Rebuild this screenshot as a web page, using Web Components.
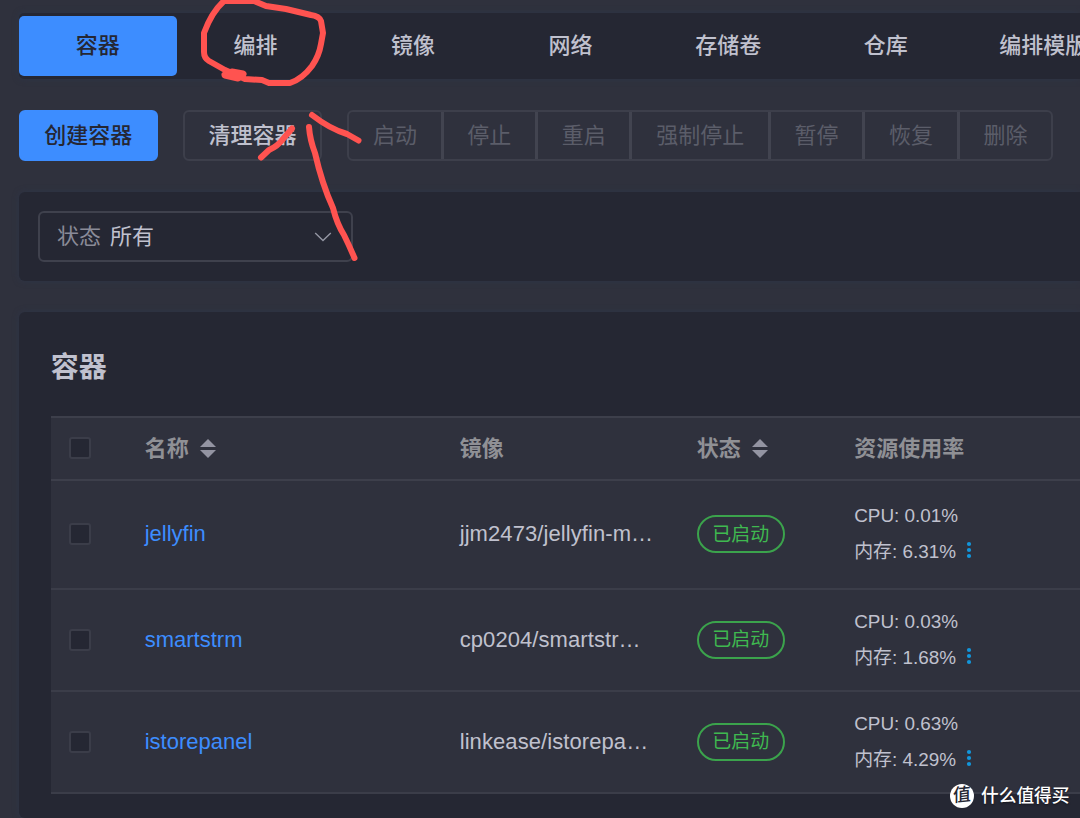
<!DOCTYPE html>
<html lang="zh-CN">
<head>
<meta charset="utf-8">
<title>容器</title>
<style>
    html, body {
        margin: 0;
        height: 818px;
        overflow: hidden;
        background: #2f313d;
    }
    body {
        font-family: "Liberation Sans", "Noto Sans CJK SC", sans-serif;
        font-size: 22px;
        color: #c0c1ce;
    }
</style>
</head>
<body>
<docker-page></docker-page>
<script>
class BaseElement extends HTMLElement {
    constructor() {
        super();
        this.attachShadow({mode: "open"});
    }

    connectedCallback() {
        const template = document.createElement("template");
        template.innerHTML = `<style>${this.getStyles()}</style>${this.getTemplate()}`;
        this.shadowRoot.replaceChildren(template.content.cloneNode(true));
    }

    getStyles() {
        return "";
    }

    getTemplate() {
        return "<slot></slot>";
    }
}

class TabItem extends BaseElement {
    getStyles() {
        return `
            :host {
                flex: 0 0 157.6px;
                height: 60px;
                display: flex;
                align-items: center;
                justify-content: center;
                box-sizing: border-box;
                padding-bottom: 6px;
                border-radius: 5px;
                font-weight: 500;
                white-space: nowrap;
            }
            :host([active]) { background: #3d8dff; color: #252733; }
        `;
    }
}

class TabBar extends BaseElement {
    getStyles() {
        return `
            :host {
                display: flex;
                box-sizing: border-box;
                height: 66px;
                padding-top: 2.7px;
                border-radius: 5px 0 0 5px;
                background: #252733;
                box-shadow: 0 0 6px #2d3547;
            }
        `;
    }
}

class ActionButton extends BaseElement {
    getStyles() {
        return `
            :host {
                display: flex;
                align-items: center;
                justify-content: center;
                box-sizing: border-box;
                width: 138.6px;
                height: 50.5px;
                padding-bottom: 5px;
                border: 2px solid #3d3f4b;
                border-radius: 6px;
                font-weight: 500;
            }
            :host([primary]) { background: #3d8dff; border-color: #3d8dff; color: #252733; }
        `;
    }
}

class ButtonGroup extends BaseElement {
    getStyles() {
        return `
            :host {
                display: flex;
                box-sizing: border-box;
                width: 706px;
                height: 50.5px;
                border: 2px solid #3d3f4b;
                border-radius: 6px;
                color: #5b5d69;
            }
            span {
                flex: 1 1 auto;
                display: flex;
                align-items: center;
                justify-content: center;
                padding-bottom: 5px;
                border-left: 3px solid #424450;
            }
            span:first-of-type { border-left: 0; }
        `;
    }

    getTemplate() {
        return this.getAttribute("labels").split(",").map(label => `<span>${label}</span>`).join("");
    }
}

class FilterSelect extends BaseElement {
    getStyles() {
        return `
            :host {
                display: flex;
                align-items: center;
                box-sizing: border-box;
                width: 315px;
                height: 51px;
                padding: 0 19px 5px 17px;
                border: 2px solid #3f414d;
                border-radius: 6px;
            }
            label { color: #8a8b98; margin-right: 9px; }
            svg { margin-left: auto; margin-top: 6px; }
        `;
    }

    getTemplate() {
        return `
            <label>${this.getAttribute("label")}</label><slot></slot>
            <svg width="18" height="12" viewBox="0 0 18 12" fill="none" stroke="#9496a3" stroke-width="1.4">
                <path d="M1.200 2 L9 9.600 L16.800 2"/>
            </svg>
        `;
    }
}

class PanelCard extends BaseElement {
    getStyles() {
        return `
            :host {
                display: block;
                box-sizing: border-box;
                border-radius: 6px 0 0 6px;
                background: #252733;
                box-shadow: 0 0 6px #2d3547;
            }
        `;
    }
}

class CheckBox extends BaseElement {
    getStyles() {
        return `
            :host {
                display: block;
                box-sizing: border-box;
                width: 22px;
                height: 22px;
                border: 2px solid #3b3d49;
                border-radius: 3px;
                background: #252733;
            }
        `;
    }

    getTemplate() {
        return "";
    }
}

class SortIcon extends BaseElement {
    getStyles() {
        return `
            :host { display: block; width: 16px; height: 19px; margin-left: 11px; }
            svg { display: block; }
        `;
    }

    getTemplate() {
        return `
            <svg width="16" height="19" viewBox="0 0 16 19" fill="#9394a2">
                <path d="M8 0 L16 8 H0 Z M0 11 H16 L8 19 Z"/>
            </svg>
        `;
    }
}

class StatusTag extends BaseElement {
    getStyles() {
        return `
            :host {
                display: flex;
                align-items: center;
                justify-content: center;
                box-sizing: border-box;
                width: 88px;
                height: 38px;
                padding-bottom: 4px;
                border: 2px solid #3ba34c;
                border-radius: 19px;
                color: #3fb950;
                font-size: 19px;
            }
        `;
    }
}

// Shared column track, so the head and the rows line up
const columns = "75.5px 315px 237px 157.5px 1fr";

class TableHead extends BaseElement {
    getStyles() {
        return `
            :host {
                display: grid;
                grid-template-columns: ${columns};
                align-items: center;
                box-sizing: border-box;
                height: 65px;
                padding-left: 18.400px;
                border-top: 2px solid #3d3f4b;
                border-bottom: 2px solid #3d3f4b;
                color: #8f9095;
                font-weight: bold;
            }
            div { display: flex; align-items: center; }
            span { position: relative; top: -2px; }
        `;
    }

    getTemplate() {
        return `
            <check-box></check-box>
            <div><span>名称</span><sort-icon></sort-icon></div>
            <div><span>镜像</span></div>
            <div><span>状态</span><sort-icon></sort-icon></div>
            <div><span>资源使用率</span></div>
        `;
    }
}

class ContainerRow extends BaseElement {
    getStyles() {
        return `
            :host {
                display: grid;
                grid-template-columns: ${columns};
                align-items: center;
                box-sizing: border-box;
                padding-left: 18.400px;
                border-bottom: 2px solid #3b3d49;
            }
            a { color: #3d8dff; }
            .image { letter-spacing: 0.08px; }
            .usage { font-size: 18.9px; line-height: 36px; }
            .memory { display: flex; align-items: center; }
            svg { margin: -4px 0 0 10px; }
        `;
    }

    getTemplate() {
        return `
            <check-box></check-box>
            <a>${this.getAttribute("name")}</a>
            <div class="image">${this.getAttribute("image")}</div>
            <status-tag>已启动</status-tag>
            <div class="usage">
                <div>CPU: ${this.getAttribute("cpu")}</div>
                <div class="memory">内存: ${this.getAttribute("memory")}
                    <svg width="6" height="18" viewBox="0 0 6 18" fill="#1296db">
                        <circle cx="3" cy="3" r="2.1"/><circle cx="3" cy="9" r="2.1"/><circle cx="3" cy="15" r="2.1"/>
                    </svg>
                </div>
            </div>
        `;
    }
}

// Hand drawn marks over the toolbar
class PenMarks extends BaseElement {
    getStyles() {
        return `
            :host { position: absolute; left: 0; top: 0; pointer-events: none; }
            svg { display: block; }
        `;
    }

    getTemplate() {
        return `
            <svg width="380" height="280" fill="none" stroke="#ff5350" stroke-width="6" stroke-linecap="round" stroke-linejoin="round">
                <path d="M224 1 C215 9 208 22 204 33 V52 Q204 58 209 61 L225 70 L245 79 L262 80 L269 83 H290 C299 80 306 74 312 66 Q319 56 321 44 L323 33 L321 21 Q319 16 311 15 L286 9 L266 6 L254 1 H224"/>
                <path d="M225 75 L238 78 L243 74 L232 72 Z" stroke-width="7" fill="#ff5350"/>
                <path d="M261 157.500 L269 150 Q278 146 283 139 L292 128.500"/>
                <path d="M312 115 Q330 129 347 134 L358.500 140.500"/>
                <path d="M309 127 Q310 140 315 153 Q322 184 333 208 Q337 224 344 235 Q349 245 354.500 258"/>
            </svg>
        `;
    }
}

class WaterMark extends BaseElement {
    getStyles() {
        return `
            :host {
                position: absolute;
                left: 950px;
                top: 782px;
                display: flex;
                align-items: center;
                gap: 7px;
                color: #fff;
                font-size: 17.7px;
                line-height: 25px;
                white-space: nowrap;
                text-shadow: 0 1px 2px #15161e;
            }
            b {
                width: 24px;
                height: 24px;
                border-radius: 50%;
                background: #fff;
                color: #252733;
                font-size: 18px;
                font-weight: 500;
                line-height: 22px;
                text-align: center;
                text-shadow: none;
            }
            i { display: block; transform: rotate(-6deg) skewX(-6deg); font-style: normal; }
            span { padding-top: 2px; font-weight: 500; }
        `;
    }

    getTemplate() {
        return "<b><i>值</i></b><span>什么值得买</span>";
    }
}

class DockerPage extends BaseElement {
    getStyles() {
        return `
            :host {
                display: flex;
                flex-direction: column;
                position: relative;
                box-sizing: border-box;
                height: 818px;
                padding: 13px 0 0 19px;
                overflow: hidden;
            }
            .toolbar { display: flex; gap: 25.5px; margin: 31.4px 0 31.2px; }
            .filters { height: 88.5px; padding: 19px; flex: none; }
            .list { margin-top: 31.5px; padding: 35.5px 0 0 31.8px; flex: 1; }
            h2 { margin: 0; height: 68px; font-size: 28px; line-height: 40px; }
            .table { background: #2f313d; }
        `;
    }

    getTemplate() {
        return `
            <tab-bar>
                <tab-item active>容器</tab-item>
                <tab-item>编排</tab-item>
                <tab-item>镜像</tab-item>
                <tab-item>网络</tab-item>
                <tab-item>存储卷</tab-item>
                <tab-item>仓库</tab-item>
                <tab-item>编排模版</tab-item>
            </tab-bar>
            <div class="toolbar">
                <action-button primary>创建容器</action-button>
                <action-button>清理容器</action-button>
                <button-group labels="启动,停止,重启,强制停止,暂停,恢复,删除"></button-group>
            </div>
            <panel-card class="filters">
                <filter-select label="状态">所有</filter-select>
            </panel-card>
            <panel-card class="list">
                <h2>容器</h2>
                <div class="table">
                    <table-head></table-head>
                    <container-row style="height: 109px" name="jellyfin" image="jjm2473/jellyfin-m…" cpu="0.01%" memory="6.31%"></container-row>
                    <container-row style="height: 102px" name="smartstrm" image="cp0204/smartstr…" cpu="0.03%" memory="1.68%"></container-row>
                    <container-row style="height: 102.500px" name="istorepanel" image="linkease/istorepa…" cpu="0.63%" memory="4.29%"></container-row>
                </div>
            </panel-card>
            <pen-marks></pen-marks>
            <water-mark></water-mark>
        `;
    }
}

customElements.define("tab-item", TabItem);
customElements.define("tab-bar", TabBar);
customElements.define("action-button", ActionButton);
customElements.define("button-group", ButtonGroup);
customElements.define("filter-select", FilterSelect);
customElements.define("panel-card", PanelCard);
customElements.define("check-box", CheckBox);
customElements.define("sort-icon", SortIcon);
customElements.define("status-tag", StatusTag);
customElements.define("table-head", TableHead);
customElements.define("container-row", ContainerRow);
customElements.define("pen-marks", PenMarks);
customElements.define("water-mark", WaterMark);
customElements.define("docker-page", DockerPage);
</script>
</body>
</html>
